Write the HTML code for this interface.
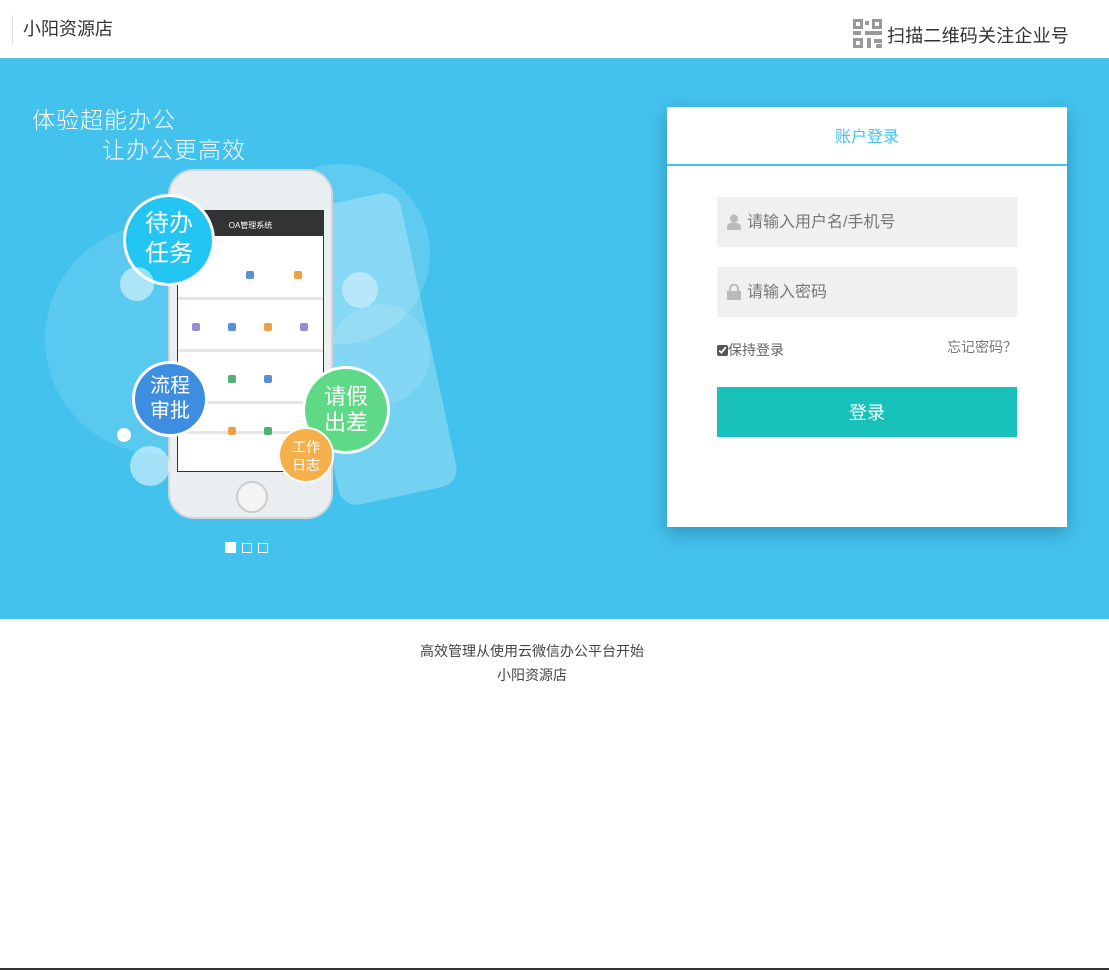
<!DOCTYPE html>
<html><head><meta charset="utf-8"><style>
*{margin:0;padding:0;box-sizing:border-box}
body{width:1109px;height:970px;background:#fff;font-family:"Liberation Sans","Noto Sans CJK SC",sans-serif;position:relative;overflow:hidden}
.hd{height:59px;position:relative;border-bottom:1px solid #5ab8d8}
.logo{position:absolute;left:12px;top:15px;border-left:1px solid #ddd;padding-left:10px;height:30px;font-size:18px;color:#333;line-height:28px}
.qr{position:absolute;left:853px;top:19px;width:29px;height:29px}
.qt{position:absolute;left:887px;top:22px;font-size:18px;color:#333;letter-spacing:0.2px}
.ban{position:absolute;top:59px;left:0;width:1109px;height:560px;background:#44c2ee}
.card{position:absolute;left:667px;top:107px;width:400px;height:420px;background:#fff;box-shadow:0 6px 18px rgba(0,60,90,.35)}
.ct{height:59px;border-bottom:2px solid #44c2ee;text-align:center;line-height:62px;color:#45c2ee;font-size:16px}
.in{position:absolute;left:50px;width:300px;height:50px;background:#f0f0f0;font-size:16px;color:#777;line-height:52px;padding-left:30px}
.in svg{position:absolute;left:10px;top:17px}
.btn{position:absolute;left:50px;top:280px;width:300px;height:50px;background:#18c1b9;color:#fff;font-size:18px;text-align:center;line-height:52px}
.ft{position:absolute;top:639px;left:0;width:1064px;text-align:center;font-size:14px;color:#444;line-height:24px}
.c{position:absolute;border-radius:50%}
.row{position:absolute;left:178px;width:145px;height:3px;background:#e5e5e5}
.ic{position:absolute;width:8px;height:8px;border-radius:2px}
</style></head><body>
<div class="hd"><div class="logo">小阳资源店</div>
<svg class="qr" viewBox="0 0 29 29"><g fill="#999"><rect x="0" y="0" width="10" height="10"/><rect x="19" y="0" width="10" height="10"/><rect x="0" y="19" width="10" height="10"/><rect x="12" y="2" width="4" height="4"/><rect x="12" y="12" width="17" height="4"/><rect x="0" y="12" width="8" height="4"/><rect x="14" y="19" width="4" height="10"/><rect x="21" y="20" width="8" height="4"/><rect x="23" y="25" width="6" height="4"/></g><g fill="#fff"><rect x="3" y="3" width="4" height="4"/><rect x="22" y="3" width="4" height="4"/><rect x="3" y="22" width="4" height="4"/></g></svg>
<div class="qt">扫描二维码关注企业号</div></div>
<div class="ban">
<div style="position:absolute;left:32px;top:42px;color:#fff;font-size:23px;letter-spacing:1px;font-weight:300">体验超能办公</div>
<div style="position:absolute;left:102px;top:72px;color:#fff;font-size:23px;letter-spacing:1px;font-weight:300">让办公更高效</div>
<div class="c" style="left:45px;top:165px;width:230px;height:230px;background:rgba(255,255,255,.12)"></div>
<div class="c" style="left:250px;top:105px;width:180px;height:180px;background:rgba(255,255,255,.15)"></div>
<div class="c" style="left:330px;top:245px;width:100px;height:100px;background:rgba(255,255,255,.12)"></div>
<div style="position:absolute;left:310px;top:140px;width:120px;height:300px;background:rgba(255,255,255,.25);border-radius:18px;transform:rotate(-12deg)"></div>
<div style="position:absolute;left:168px;top:110px;width:165px;height:350px;background:#e9eef1;border-radius:26px;border:2px solid #cfd6da"></div>
<div style="position:absolute;left:177px;top:151px;width:147px;height:262px;background:#fff;border:1px solid #333"></div>
<div style="position:absolute;left:177px;top:151px;width:147px;height:26px;background:#333;color:#fff;font-size:8px;text-align:center;line-height:32px">OA管理系统</div>
<div class="row" style="top:238px"></div><div class="row" style="top:290px"></div><div class="row" style="top:342px"></div><div class="row" style="top:372px"></div>
<div class="ic" style="left:246px;top:212px;background:#5a8fd8"></div><div class="ic" style="left:294px;top:212px;background:#f0a040"></div>
<div class="ic" style="left:192px;top:264px;background:#9a8ad8"></div><div class="ic" style="left:228px;top:264px;background:#5a8fd8"></div><div class="ic" style="left:264px;top:264px;background:#f0a040"></div><div class="ic" style="left:300px;top:264px;background:#9a8ad8"></div>
<div class="ic" style="left:228px;top:316px;background:#50b070"></div><div class="ic" style="left:264px;top:316px;background:#5a8fd8"></div>
<div class="ic" style="left:228px;top:368px;background:#f0a040"></div><div class="ic" style="left:264px;top:368px;background:#50b070"></div>
<div style="position:absolute;left:236px;top:422px;width:32px;height:32px;border-radius:50%;border:2px solid #ccc;background:#f4f4f4"></div>
<div class="c" style="left:123px;top:135px;width:92px;height:92px;background:#23c6f2;border:3px solid #fff;color:#fff;font-size:24px;text-align:center;line-height:30px;padding-top:12px">待办<br>任务</div>
<div class="c" style="left:132px;top:302px;width:76px;height:76px;background:#3d8ee0;border:3px solid #fff;color:#fff;font-size:20px;text-align:center;line-height:25px;padding-top:10px">流程<br>审批</div>
<div class="c" style="left:302px;top:307px;width:88px;height:88px;background:#5ed986;border:3px solid #fff;color:#fff;font-size:22px;text-align:center;line-height:26px;padding-top:15px">请假<br>出差</div>
<div class="c" style="left:278px;top:368px;width:56px;height:56px;background:#f5b04c;border:2px solid #fff;color:#fff;font-size:14px;text-align:center;line-height:18px;padding-top:9px">工作<br>日志</div>
<div class="c" style="left:120px;top:208px;width:34px;height:34px;background:rgba(255,255,255,.5)"></div>
<div class="c" style="left:130px;top:387px;width:40px;height:40px;background:rgba(255,255,255,.5)"></div>
<div class="c" style="left:117px;top:369px;width:14px;height:14px;background:#fff"></div>
<div class="c" style="left:342px;top:213px;width:36px;height:36px;background:rgba(255,255,255,.4)"></div>
<div style="position:absolute;left:225px;top:483px;width:11px;height:11px;background:#fff"></div>
<div style="position:absolute;left:242px;top:484px;width:10px;height:10px;border:1px solid #fff"></div>
<div style="position:absolute;left:258px;top:484px;width:10px;height:10px;border:1px solid #fff"></div>
</div>
<div class="card"><div class="ct">账户登录</div>
<div class="in" style="top:90px"><svg width="14" height="16" viewBox="0 0 14 16"><circle cx="7" cy="4.5" r="4" fill="#bbb"/><path d="M0 16v-3c0-3 3-4.5 7-4.5s7 1.5 7 4.5v3z" fill="#bbb"/></svg>请输入用户名/手机号</div>
<div class="in" style="top:160px"><svg width="14" height="16" viewBox="0 0 14 16"><path d="M3 7V4.5a4 4 0 018 0V7" stroke="#bbb" stroke-width="2" fill="none"/><rect x="0" y="7" width="14" height="9" fill="#bbb"/></svg>请输入密码</div>
<div style="position:absolute;left:50px;top:233px;font-size:14px;color:#666"><input type="checkbox" checked style="width:11px;height:11px;vertical-align:-1px;accent-color:#555">保持登录</div>
<div style="position:absolute;right:50px;top:230px;font-size:14px;color:#777">忘记密码？</div>
<div class="btn">登录</div></div>
<div class="ft">高效管理从使用云微信办公平台开始<br>小阳资源店</div>
<div style="position:absolute;left:0;top:968px;width:1109px;height:2px;background:#333"></div>
</body></html>
